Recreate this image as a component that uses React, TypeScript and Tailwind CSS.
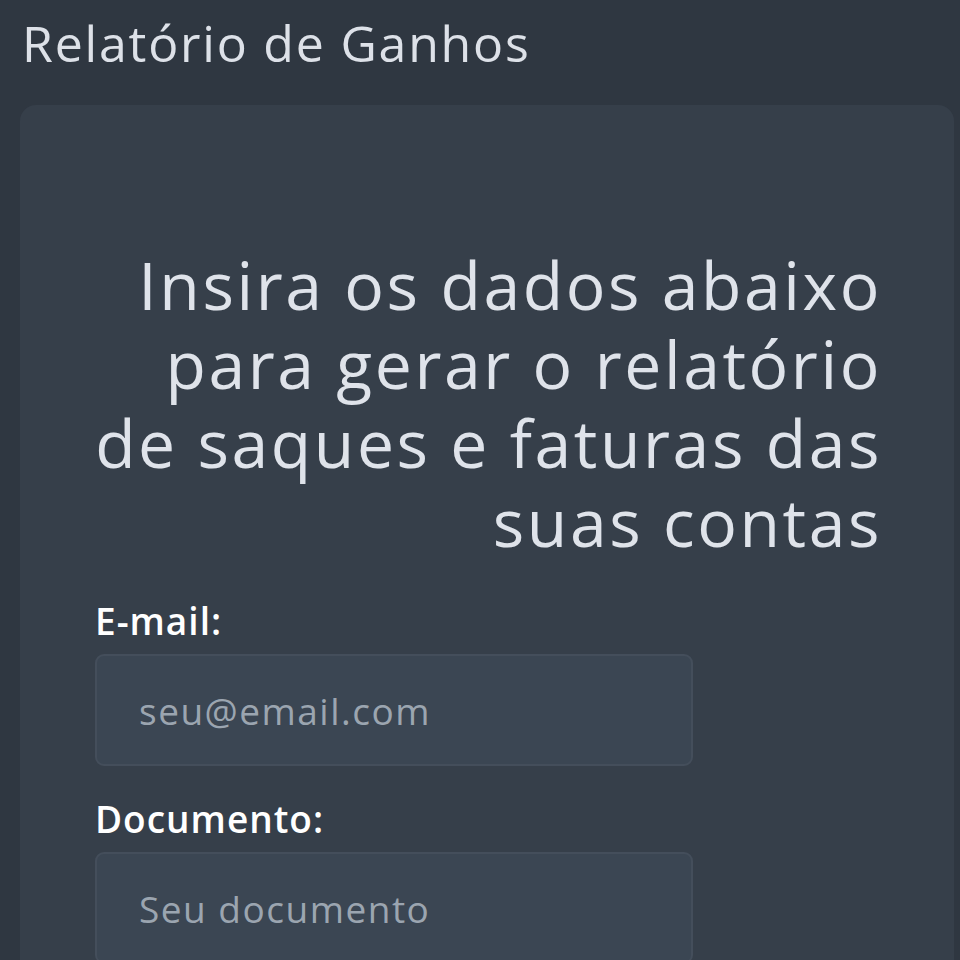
import React from 'react';

function Field({ label, placeholder }: { label: string; placeholder: string }) {
  return (
    <div className="flex flex-col">
      <label className="text-[37px] font-semibold text-white leading-[48px] tracking-[1px]">{label}</label>
      <input
        type="text"
        placeholder={placeholder}
        className="mt-[9px] w-[598px] h-[112px] rounded-[9px] bg-[#3b4653] border-2 border-[#444e5b] px-[42px] text-[37px] tracking-[1.5px] text-white placeholder:text-[#9ba5b0] outline-none"
      />
    </div>
  );
}

export default function App() {
  return (
    <div className="min-h-screen bg-[#2f3741] font-['Open_Sans',sans-serif] overflow-hidden">
      <h1 className="px-[22px] pt-[13px] text-[50px] leading-[60px] tracking-[1.8px] text-[#dde1e8] font-medium">
        Relatório de Ganhos
      </h1>

      {/* Card */}
      <div className="mt-[32px] ml-[20px] mr-[6px] rounded-[16px] bg-[#363f4a] pl-[75px] pr-[72px] pt-[140px] pb-[40px] h-[900px]">
        <p className="text-right text-[66px] leading-[79px] tracking-[2.6px] text-[#dfe3ea] font-medium">
          Insira os dados abaixo
          <br />
          para gerar o relatório
          <br />
          de saques e faturas das
          <br />
          suas contas
        </p>

        <div className="mt-[36px] flex flex-col gap-[29px]">
          <Field label="E-mail:" placeholder="seu@email.com" />
          <Field label="Documento:" placeholder="Seu documento" />
        </div>
      </div>
    </div>
  );
}
